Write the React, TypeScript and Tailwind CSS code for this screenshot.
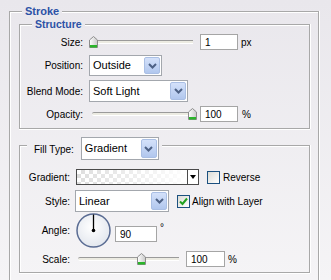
import type { ReactNode } from 'react'

const Thumb = () => (
    <svg width="9" height="12" viewBox="0 0 9 12">
        <defs>
            <linearGradient id="thumbFill" x1="0" y1="0" x2="1" y2="0">
                <stop offset="0" stopColor="#ffffff" />
                <stop offset="1" stopColor="#c9c9c9" />
            </linearGradient>
        </defs>
        <path d="M0.5 4 L4.5 0.5 L8.5 4 V11.5 H0.5 Z" fill="url(#thumbFill)" stroke="#8c8c8c" />
        <rect x="1" y="9" width="7" height="2.5" fill="#2ab52a" />
    </svg>
)

interface SliderProps {
    width: string
    trackClass: string
    thumbClass: string
}

const Slider = ({ width, trackClass, thumbClass }: SliderProps) => (
    <div className={`relative h-full ${width}`}>
        <div className={`absolute top-1/2 -translate-y-1/2 h-[4px] rounded-l-sm border-t border-[#9a9a9a] bg-[#ecebe2] border-b border-b-white ${trackClass}`} />
        <div className={`absolute top-1/2 -translate-y-1/2 ${thumbClass}`}>
            <Thumb />
        </div>
    </div>
)

const Chevron = () => (
    <svg width="9" height="6" viewBox="0 0 9 6">
        <path d="M1 1 L4.5 4.5 L8 1" fill="none" stroke="#4d6185" strokeWidth="2" />
    </svg>
)

const Select = ({ value, width }: { value: string; width: string }) => (
    <div className={`flex h-full items-stretch border border-[#a3a7ad] bg-white ${width}`}>
        <span className="flex flex-1 items-center pl-[3px] text-[11px] text-black">{value}</span>
        <div className="m-[1px] flex w-[16px] items-center justify-center rounded-[2px] border border-[#aabfe4] bg-[linear-gradient(to_bottom,#d4e1fa,#b1c7ee)]">
            <Chevron />
        </div>
    </div>
)

const NumInput = ({ value, width }: { value: string; width: string }) => (
    <div className={`flex h-[16px] items-center border border-[#a5a5a5] bg-white pl-[4px] text-[10px] text-black ${width}`}>
        {value}
    </div>
)

const CheckBox = ({ checked }: { checked?: boolean }) => (
    <div className="flex h-[13px] w-[13px] items-center justify-center border border-[#1c5180] bg-[linear-gradient(135deg,#dcdcd6,#ffffff)]">
        {checked && (
            <svg width="11" height="11" viewBox="0 0 11 11">
                <path d="M2 5.5 L4.5 8 L9 2.5" fill="none" stroke="#21a121" strokeWidth="2" />
            </svg>
        )}
    </div>
)

const Row = ({ label, labelWidth, className, children }: { label: string; labelWidth: string; className: string; children: ReactNode }) => (
    <div className={`flex items-center ${className}`}>
        <span className={`shrink-0 text-right text-[10px] text-black ${labelWidth}`}>{label}</span>
        {children}
    </div>
)

const AngleDial = () => (
    <svg width="35" height="35" viewBox="0 0 35 35">
        <defs>
            <radialGradient id="dialFill" cx="0.45" cy="0.4" r="0.6">
                <stop offset="0" stopColor="#ffffff" />
                <stop offset="1" stopColor="#e3e7ee" />
            </radialGradient>
        </defs>
        <circle cx="17.5" cy="17.5" r="16.5" fill="url(#dialFill)" stroke="#5a6c93" strokeWidth="1.5" />
        <line x1="17.5" y1="17.5" x2="17.5" y2="1.5" stroke="#000" strokeWidth="1.3" />
        <circle cx="17.5" cy="17.5" r="1.8" fill="#000" />
    </svg>
)

// etched frame: gray line with a white line next to it
const frame = 'flex flex-col border-x border-b border-[#a8a8a8] shadow-[inset_1px_0_0_#fff,1px_0_0_#fff,0_1px_0_#fff]'
const line = 'h-[2px] border-t border-[#a8a8a8] border-b border-b-white'

// group box title: line segment, title, rest of line
const GroupTitle = ({ title, size }: { title: string; size: string }) => (
    <div className="-mt-[6px] flex h-[13px] items-start">
        <div className={`mt-[6px] w-[12px] ${line}`} />
        <span className={`px-[3px] font-bold leading-[13px] text-[#2d52a6] ${size}`}>{title}</span>
        <div className={`mt-[6px] flex-1 ${line}`} />
    </div>
)

export default function App() {
    return (
        <div className="h-[280px] w-[331px] overflow-hidden bg-[linear-gradient(to_bottom,#e9e7ec,#f5f4f6)] pt-[11px] font-['Liberation_Sans',Arial,sans-serif]">
            {/* Stroke */}
            <div className={`ml-[9px] w-[310px] pb-[30px] ${frame}`}>
                <GroupTitle title="Stroke" size="text-[11px]" />

                {/* Structure */}
                <div className={`ml-[9px] mt-[6px] w-[291px] pb-[6px] ${frame}`}>
                    <GroupTitle title="Structure" size="text-[10.5px]" />
                    <Row label="Size:" labelWidth="w-[63px]" className="mt-[3px] h-[16px]">
                        <div className="ml-[6px] h-full">
                            <Slider width="w-[104px]" trackClass="left-[3px] right-0" thumbClass="left-0" />
                        </div>
                        <div className="ml-[7px]">
                            <NumInput value="1" width="w-[38px]" />
                        </div>
                        <span className="ml-[3px] text-[10px] text-black">px</span>
                    </Row>
                    <Row label="Position:" labelWidth="w-[63px]" className="mt-[5px] h-[21px]">
                        <div className="ml-[6px] h-full">
                            <Select value="Outside" width="w-[73px]" />
                        </div>
                    </Row>
                    <Row label="Blend Mode:" labelWidth="w-[63px]" className="mt-[4px] h-[22px]">
                        <div className="ml-[6px] h-full">
                            <Select value="Soft Light" width="w-[99px]" />
                        </div>
                    </Row>
                    <Row label="Opacity:" labelWidth="w-[63px]" className="mt-[4px] h-[16px]">
                        <div className="ml-[6px] h-full">
                            <Slider width="w-[109px]" trackClass="left-[3px] right-[6px]" thumbClass="left-[99px]" />
                        </div>
                        <div className="ml-[2px]">
                            <NumInput value="100" width="w-[38px]" />
                        </div>
                        <span className="ml-[4px] text-[10px] text-black">%</span>
                    </Row>
                </div>

                {/* Fill Type */}
                <div className={`ml-[9px] mt-[16px] w-[291px] pb-[5px] ${frame}`}>
                    <div className="-mt-[8px] flex h-[23px] items-start">
                        <div className={`mt-[8px] w-[7px] ${line}`} />
                        <span className="ml-[7px] mt-[5px] text-[10px] text-black">Fill Type:</span>
                        <div className="ml-[7px] h-[23px]">
                            <Select value="Gradient" width="w-[78px]" />
                        </div>
                        <div className={`ml-[3px] mt-[8px] flex-1 ${line}`} />
                    </div>
                    <Row label="Gradient:" labelWidth="w-[50px]" className="mt-[9px] h-[16px]">
                        <div className="ml-[6px] flex h-full w-[123px] border border-[#4a4a4a] bg-white">
                            <div className="flex-1 bg-[repeating-conic-gradient(#dedede_0_25%,#ffffff_0_50%)] bg-[length:8px_8px]">
                                <div className="h-full w-full bg-[linear-gradient(to_right,rgba(255,255,255,0),rgba(255,255,255,0.95))]" />
                            </div>
                            <div className="flex w-[11px] items-center justify-center border-l border-[#4a4a4a]">
                                <div className="h-0 w-0 border-x-[3px] border-t-[4px] border-x-transparent border-t-black" />
                            </div>
                        </div>
                        <div className="ml-[8px]">
                            <CheckBox />
                        </div>
                        <span className="ml-[3px] text-[10px] text-black">Reverse</span>
                    </Row>
                    <Row label="Style:" labelWidth="w-[50px]" className="mt-[5px] h-[22px]">
                        <div className="ml-[5px] h-full">
                            <Select value="Linear" width="w-[94px]" />
                        </div>
                        <div className="ml-[8px]">
                            <CheckBox checked />
                        </div>
                        <span className="ml-[2px] text-[10px] text-black">Align with Layer</span>
                    </Row>
                    <Row label="Angle:" labelWidth="w-[50px]" className="mt-[1px] h-[35px]">
                        <div className="ml-[6px] h-[35px]">
                            <AngleDial />
                        </div>
                        <div className="ml-[4px] mt-[7px]">
                            <NumInput value="90" width="w-[42px]" />
                        </div>
                        <span className="ml-[3px] mt-[8px] self-start text-[10px] leading-[14px] text-black">°</span>
                    </Row>
                    <Row label="Scale:" labelWidth="w-[50px]" className="mt-[3px] h-[16px]">
                        <div className="ml-[6px] h-full">
                            <Slider width="w-[103px]" trackClass="left-[2px] right-0" thumbClass="left-[61px]" />
                        </div>
                        <div className="ml-[7px]">
                            <NumInput value="100" width="w-[39px]" />
                        </div>
                        <span className="ml-[3px] text-[10px] text-black">%</span>
                    </Row>
                </div>
            </div>
        </div>
    )
}
